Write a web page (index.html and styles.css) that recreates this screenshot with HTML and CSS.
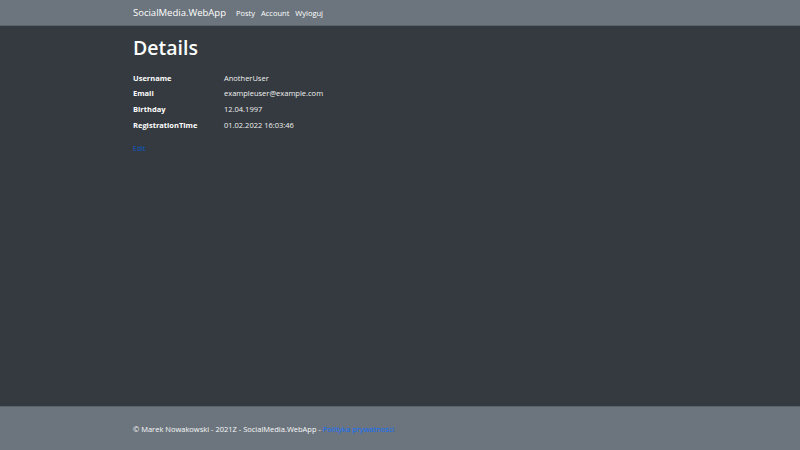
FILE: index.html
```html
<!DOCTYPE html>
<html lang="pl">
<head>
    <meta charset="UTF-8">
    <meta name="viewport" content="width=device-width, initial-scale=1.0">
    <title>Details - SocialMedia.WebApp</title>
    <link rel="stylesheet" href="styles.css">
</head>
<body>
    <header class="navbar">
        <div class="container nav-inner">
            <a class="brand" href="#">SocialMedia.WebApp</a>
            <nav class="nav-links">
                <a href="#">Posty</a>
                <a href="#">Account</a>
                <a href="#">Wyloguj</a>
            </nav>
        </div>
    </header>

    <main class="container content">
        <h1 class="page-title">Details</h1>

        <dl class="details">
            <dt>Username</dt>
            <dd>AnotherUser</dd>
            <dt>Email</dt>
            <dd>exampleuser@example.com</dd>
            <dt>Birthday</dt>
            <dd>12.04.1997</dd>
            <dt>RegistrationTime</dt>
            <dd>01.02.2022 16:03:46</dd>
        </dl>

        <div class="actions">
            <a href="#">Edit</a>
        </div>
    </main>

    <footer class="footer">
        <div class="container">
            &copy; Marek Nowakowski - 2021Z - SocialMedia.WebApp - <a href="#">Polityka prywatności</a>
        </div>
    </footer>
</body>
</html>
```

FILE: styles.css
```css
* {
    margin: 0;
    padding: 0;
    box-sizing: border-box;
}

body {
    font-family: 'Open Sans', 'Noto Sans', sans-serif;
    background: #343a40;
    color: #f8f9fa;
    height: 100vh;
    display: flex;
    flex-direction: column;
    overflow: hidden;
}

a {
    text-decoration: none;
}

.container {
    padding: 0 133px;
}

.navbar {
    background: #6c757d;
    height: 26px;
    border-bottom: 1px solid #5c646b;
}

.nav-inner {
    display: flex;
    align-items: center;
    height: 100%;
}

.brand {
    color: #ffffff;
    font-size: 9.5px;
    margin-right: 10px;
}

.nav-links {
    display: flex;
    gap: 6px;
}

.nav-links a {
    color: #ffffff;
    font-size: 7.5px;
}

.content {
    flex: 1;
    padding-top: 12px;
}

.page-title {
    font-size: 19.5px;
    font-weight: 600;
    line-height: 1;
    color: #ffffff;
    margin-bottom: 15px;
}

.details {
    display: grid;
    grid-template-columns: 91px 1fr;
    row-gap: 5.8px;
    font-size: 7.5px;
    line-height: 10px;
}

.details dt {
    font-weight: 700;
    color: #ffffff;
}

.details dd {
    color: #f1f1f1;
}

.actions {
    margin-top: 14px;
    font-size: 7px;
}

.actions a {
    color: #0d5bc6;
}

.footer {
    background: #6c757d;
    height: 44px;
    border-top: 1px solid #5c646b;
    display: flex;
    align-items: center;
    font-size: 7.5px;
    color: #f8f9fa;
}

.footer a {
    color: #0d6efd;
}
```
